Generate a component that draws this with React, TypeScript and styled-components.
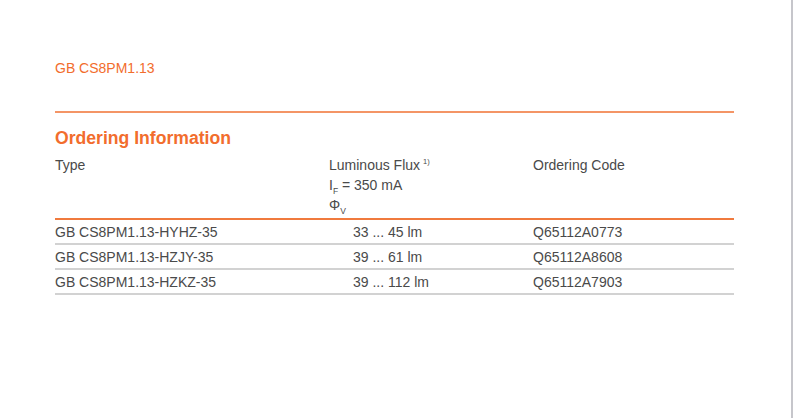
import styled, { createGlobalStyle } from 'styled-components';

const GlobalStyle = createGlobalStyle`
  html, body {
    margin: 0;
    padding: 0;
    background: #ffffff;
  }
  body {
    font-family: 'Liberation Sans', Arial, sans-serif;
  }
`;

const orange = '#f26d2d';

const Page = styled.div`
  box-sizing: border-box;
  width: 793px;
  height: 418px;
  overflow: hidden;
  border-right: 2px solid #c6c6cb;
  background: #ffffff;
  padding: 60px 57px 0 55px;
`;

const DocTitle = styled.div`
  color: ${orange};
  font-size: 14px;
  line-height: 16px;
  margin-bottom: 35px;
`;

const Rule = styled.div`
  height: 2px;
  background: #f49566;
`;

const SectionTitle = styled.h2`
  margin: 15px 0 0;
  color: ${orange};
  font-size: 17.6px;
  font-weight: bold;
  line-height: 20px;
`;

const Table = styled.table`
  width: 100%;
  border-collapse: collapse;
  margin-top: 7px;
  font-size: 14px;
  color: #4a4a4a;
`;

const HeadCell = styled.th<{ $width: number }>`
  width: ${(p) => p.$width}px;
  text-align: left;
  vertical-align: top;
  font-weight: normal;
  padding: 0 0 3px;
  line-height: 20px;
  border-bottom: 2px solid #f07a3e;
`;

const Cell = styled.td<{ $indent?: boolean }>`
  padding: 1px 0 0 ${(p) => (p.$indent ? 24 : 0)}px;
  height: 22px;
  line-height: 22px;
  border-bottom: 2px solid #d2d2d2;
  white-space: nowrap;
`;

const Note = styled.sup`
  font-size: 7.5px;
  line-height: 0;
  vertical-align: 6px;
  margin-left: 3px;
`;

const Sub = styled.sub`
  font-size: 8.5px;
  line-height: 0;
  vertical-align: -4px;
`;

const rows = [
  { type: 'GB CS8PM1.13-HYHZ-35', flux: '33 ... 45 lm', code: 'Q65112A0773' },
  { type: 'GB CS8PM1.13-HZJY-35', flux: '39 ... 61 lm', code: 'Q65112A8608' },
  { type: 'GB CS8PM1.13-HZKZ-35', flux: '39 ... 112 lm', code: 'Q65112A7903' },
];

export default function App() {
  return (
    <>
      <GlobalStyle />
      <Page>
        <DocTitle>GB CS8PM1.13</DocTitle>
        <Rule />
        <SectionTitle>Ordering Information</SectionTitle>
        <Table>
          <thead>
            <tr>
              <HeadCell $width={274}>Type</HeadCell>
              <HeadCell $width={204}>
                Luminous Flux<Note>1)</Note>
                <br />
                I<Sub>F</Sub> = 350 mA
                <br />
                Φ<Sub>V</Sub>
              </HeadCell>
              <HeadCell $width={201}>Ordering Code</HeadCell>
            </tr>
          </thead>
          <tbody>
            {rows.map((r) => (
              <tr key={r.code}>
                <Cell>{r.type}</Cell>
                <Cell $indent>{r.flux}</Cell>
                <Cell>{r.code}</Cell>
              </tr>
            ))}
          </tbody>
        </Table>
      </Page>
    </>
  );
}
